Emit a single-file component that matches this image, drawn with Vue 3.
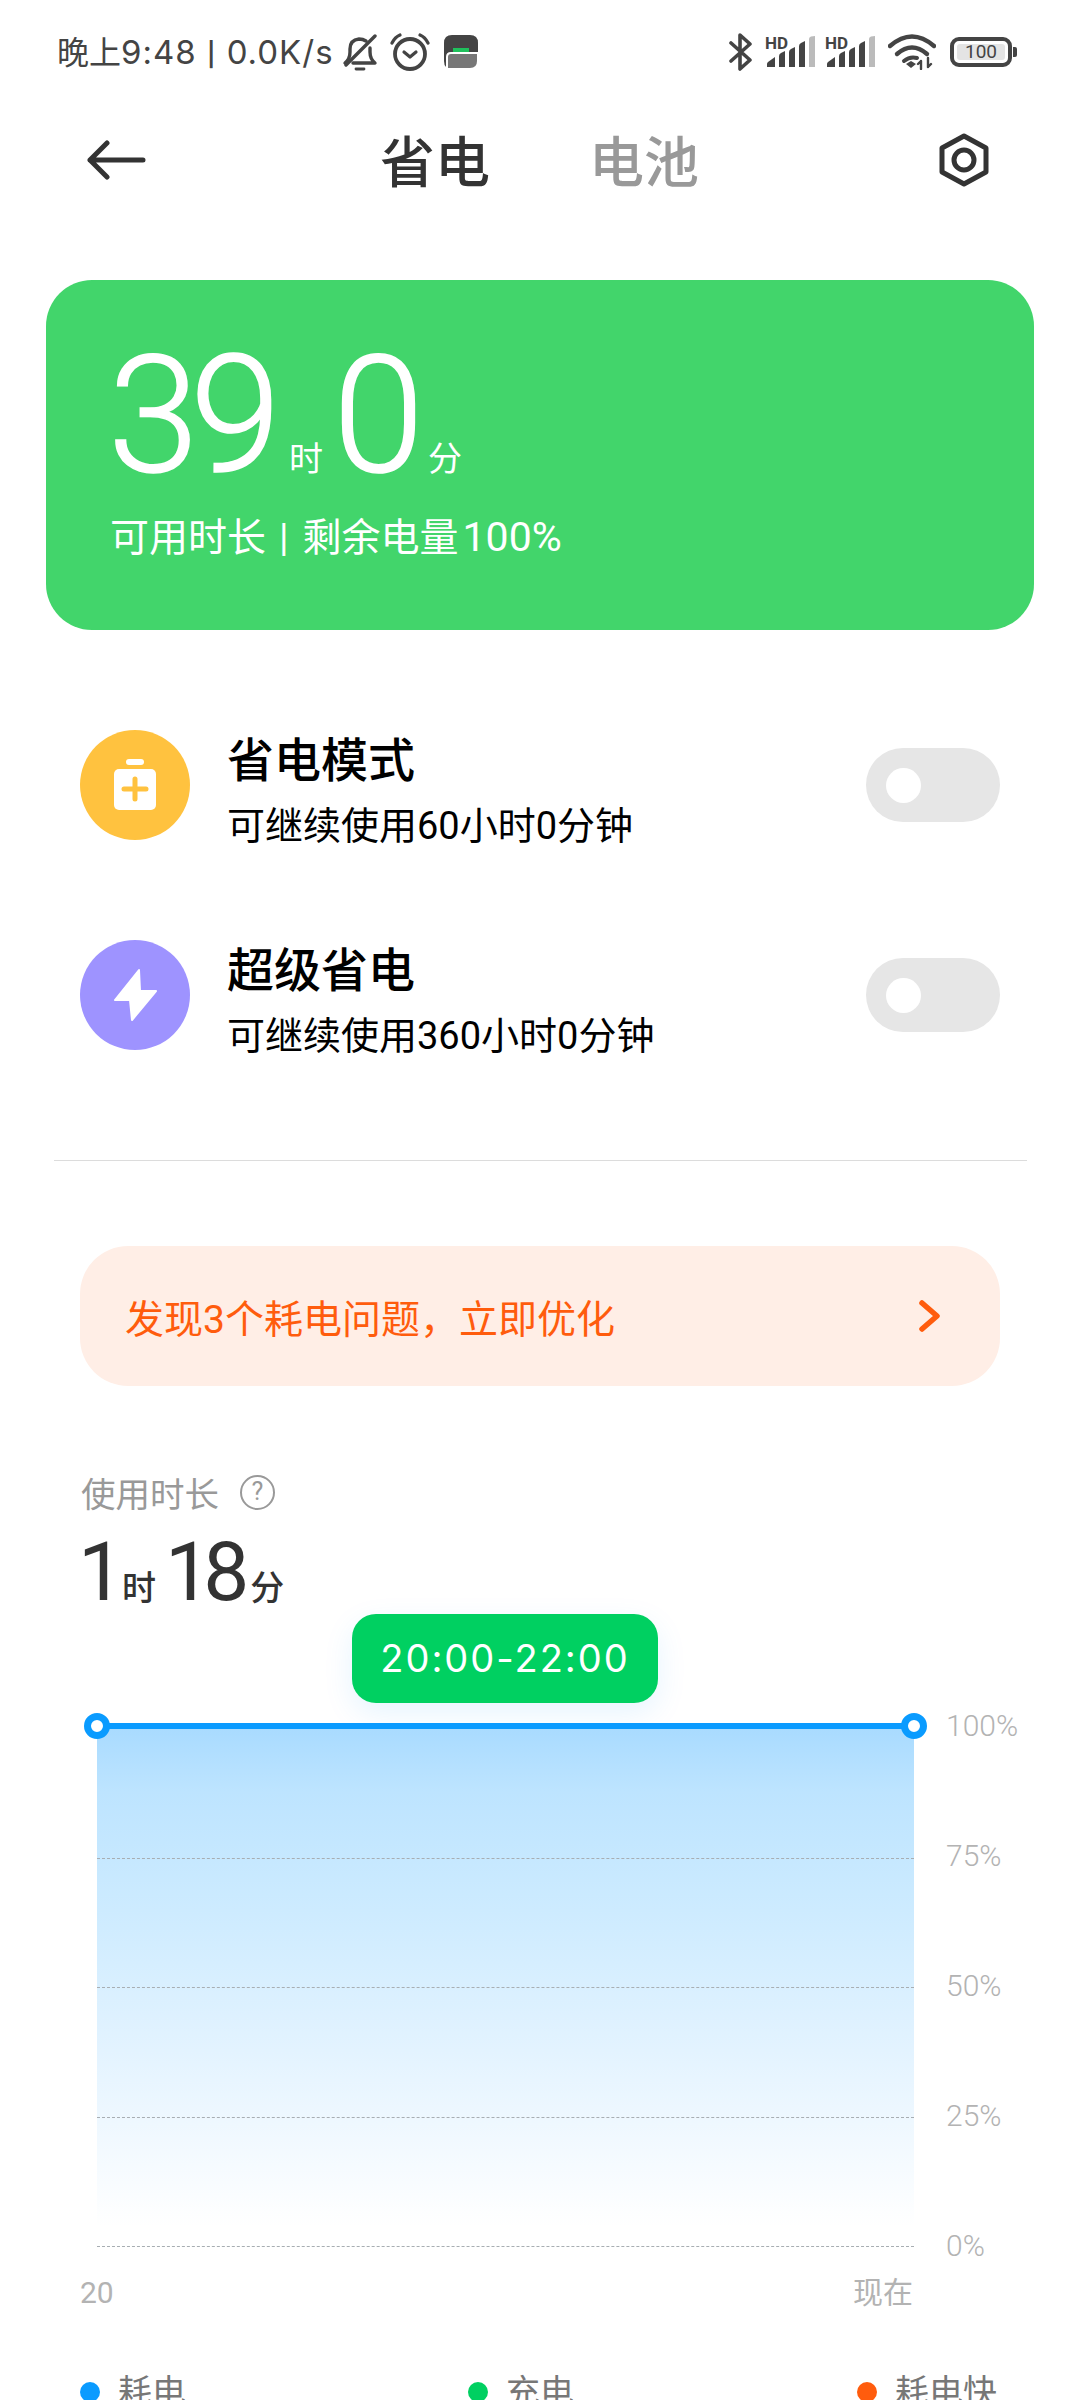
<script setup>
const modes = [
  { title: '省电模式', sub: '可继续使用60小时0分钟', color: 'yellow', kind: 'plus' },
  { title: '超级省电', sub: '可继续使用360小时0分钟', color: 'purple', kind: 'bolt' },
]
const axis = ['100%', '75%', '50%', '25%', '0%']
const legend = [
  { label: '耗电', color: 'blue' },
  { label: '充电', color: 'green' },
  { label: '耗电快', color: 'orange' },
]
const bars = [
  'M0 31 V28 Q0 27 1 26 L8 21 V31 Z',
  'M12 31 V20 Q12 18 14 17 L18 15 V31 Z',
  'M22 31 V16 Q22 14 24 13 L28 11 V31 Z',
  'M32 31 V10 Q32 8 34 7 L38 5 V31 Z',
]
</script>

<template>
  <div class="page">
    <div class="status">
      <div class="status-text">晚上<span class="status-latin">9:48 <span class="status-sep">|</span> 0.0K/s</span></div>
      <svg class="ic-bell" viewBox="0 0 36 38" fill="none" stroke="#444" stroke-width="3.400" stroke-linecap="round" stroke-linejoin="round">
        <path d="M3 29 Q8 25 8 18 V15 Q8 6 17 5 Q21 5 24 7" />
        <path d="M28 14 V18 Q28 25 33 29 H11" />
        <path d="M4 31 L33 2" />
        <path d="M14 35 H22" stroke-width="2.800" />
      </svg>
      <svg class="ic-alarm" viewBox="0 0 40 38" fill="none" stroke="#444" stroke-linecap="round" stroke-linejoin="round">
        <circle cx="20" cy="21" r="15" stroke-width="3.800" />
        <path d="M14 19 L20 24 L26 19" stroke-width="3.200" />
        <path d="M2 10 Q5 4 10 2 M30 2 Q35 4 38 10" stroke-width="3.200" />
      </svg>
      <svg class="ic-app" viewBox="0 0 34 34">
        <path d="M8 0 H26 Q34 0 34 8 V26 Q34 34 26 34 H8 Q0 34 0 26 V8 Q0 0 8 0 Z" fill="#444" />
        <rect x="9" y="13" width="16" height="4" fill="#1fc15c" />
        <path d="M3 34 V22 Q3 18 7 18 H34 V26 Q34 34 26 34 Z" fill="#777" stroke="#fff" stroke-width="2" />
      </svg>
      <div class="status-right">
        <svg class="ic-bt" viewBox="0 0 24 40" fill="none" stroke="#444" stroke-width="3.600" stroke-linecap="round" stroke-linejoin="round">
          <path d="M2 11 L21 28 L11 37 V3 L21 12 L2 29" />
        </svg>
        <svg v-for="n in 2" :key="n" class="ic-signal" viewBox="0 0 50 32">
          <text x="0" y="13" class="hd">HD</text>
          <g transform="translate(2 0)">
            <path v-for="(d, i) in bars" :key="i" :d="d" fill="#444" />
            <path d="M42 31 V3 Q42 1 44 0.500 L48 0 V31 Z" fill="#bbb" />
          </g>
        </svg>
        <svg class="ic-wifi" viewBox="0 0 48 36" fill="none" stroke="#444" stroke-linecap="round">
          <path d="M2 12 Q24 -7 46 12" stroke-width="4.400" />
          <path d="M9 20 Q24 7 39 20" stroke-width="4.400" />
          <path d="M16 27 Q22 22 29 24" stroke-width="4" />
          <path d="M18 30 L23 34 L28 30 L23 27 Z" fill="#444" stroke="none" />
          <path d="M33 35 V27 M30 30 L33 27 M40 24 V33 M40 33 L43 30" stroke-width="2.400" />
        </svg>
        <div class="battery">
          <div class="battery-body"><span class="battery-level">100</span></div>
          <span class="battery-nub"></span>
        </div>
      </div>
    </div>

    <div class="nav">
      <svg class="ic-back" viewBox="0 0 60 40" fill="none" stroke="#333" stroke-width="5" stroke-linecap="round" stroke-linejoin="round">
        <path d="M57 20 H4 M21 3 L4 20 L21 37" />
      </svg>
      <span class="tab active">省电</span>
      <span class="tab">电池</span>
      <svg class="ic-gear" viewBox="0 0 50 54" fill="none" stroke="#333" stroke-width="5" stroke-linejoin="round">
        <path d="M25 3 L47 15 V39 L25 51 L3 39 V15 Z" />
        <circle cx="25" cy="27" r="10" />
      </svg>
    </div>

    <section class="hero">
      <div class="hero-time">
        <span class="hero-num">39</span><span class="hero-unit unit-h">时</span><span class="hero-num">0</span><span class="hero-unit unit-m">分</span>
      </div>
      <div class="hero-sub">可用时长<span class="hero-sep">|</span>剩余电量<span class="hero-latin">100%</span></div>
    </section>

    <section class="modes">
      <div v-for="m in modes" :key="m.title" class="mode">
        <div class="mode-icon" :class="m.color">
          <svg v-if="m.kind === 'plus'" viewBox="0 0 110 110">
            <rect x="46" y="29" width="18" height="6" rx="3" fill="#fff" />
            <rect x="34" y="39" width="42" height="41" rx="5" fill="#fff" />
            <path d="M55 49 V69 M44 59 H66" stroke="#ffc23f" stroke-width="5" stroke-linecap="round" />
          </svg>
          <svg v-else viewBox="0 0 110 110">
            <path d="M59 30 L35 60 H50 L52 80 L76 51 H60 Z" fill="#fff" stroke="#fff" stroke-width="2" stroke-linejoin="round" />
          </svg>
        </div>
        <div class="mode-text">
          <div class="mode-title">{{ m.title }}</div>
          <div class="mode-sub">{{ m.sub }}</div>
        </div>
        <div class="toggle"><span class="knob"></span></div>
      </div>
    </section>

    <div class="divider"></div>

    <div class="banner">
      <span>发现3个耗电问题，立即优化</span>
      <svg class="ic-chevron" viewBox="0 0 24 34" fill="none" stroke="#ff5c0d" stroke-width="5.500" stroke-linecap="round" stroke-linejoin="round">
        <path d="M4 4 L19 17 L4 30" />
      </svg>
    </div>

    <div class="usage-label">
      <span>使用时长</span>
      <span class="help">?</span>
    </div>
    <div class="usage-time">
      <span class="usage-num">1</span><span class="usage-unit">时</span><span class="usage-num second">18</span><span class="usage-unit last">分</span>
    </div>

    <div class="tip">20:00-22:00</div>

    <div class="chart">
      <div class="plot">
        <span class="dot left"></span>
        <span class="dot right"></span>
        <div v-for="n in 4" :key="n" class="grid-row"></div>
      </div>
      <div class="axis">
        <span v-for="a in axis" :key="a" class="axis-label">{{ a }}</span>
      </div>
    </div>

    <div class="x-axis">
      <span>20</span>
      <span>现在</span>
    </div>

    <div class="legend">
      <div v-for="l in legend" :key="l.label" class="legend-item">
        <span class="legend-dot" :class="l.color"></span>
        <span>{{ l.label }}</span>
      </div>
    </div>
  </div>
</template>

<style>
html, body { margin: 0; background: #fff; }
</style>

<style scoped>
.page {
  width: 1080px;
  height: 2400px;
  overflow: hidden;
  background: #fff;
  font-family: Roboto, "Noto Sans CJK SC", sans-serif;
  color: #333;
}
.status {
  height: 104px;
  display: flex;
  align-items: center;
  padding: 0 63px 0 57px;
  box-sizing: border-box;
}
.status-text { font-size: 32px; line-height: 40px; color: #444; white-space: nowrap; width: 285px; }
.status-latin { font-family: Inter, Roboto, sans-serif; font-size: 33px; letter-spacing: 1px; }
.status-sep { font-family: Roboto, sans-serif; font-weight: 700; }
.ic-bell { width: 36px; height: 38px; margin-top: 1px; }
.ic-alarm { width: 40px; height: 38px; margin-left: 12px; }
.ic-app { width: 34px; height: 34px; margin-left: 14px; }
.status-right { margin-left: auto; display: flex; align-items: center; }
.ic-bt { width: 24px; height: 40px; margin-right: 12px; }
.ic-signal { width: 50px; height: 32px; margin-right: 10px; overflow: visible; }
.hd { font: 700 17px Roboto, sans-serif; fill: #444; }
.ic-wifi { width: 48px; height: 36px; margin-left: 3px; margin-right: 14px; }
.battery { display: flex; align-items: center; }
.battery-body {
  width: 62px;
  height: 30px;
  box-sizing: border-box;
  border: 4px solid #444;
  border-radius: 9px;
  padding: 3px;
  display: flex;
}
.battery-level {
  flex: 1;
  background: #e4e4e4;
  border-radius: 3px;
  font-size: 19px;
  line-height: 16px;
  text-align: center;
  color: #444;
}
.battery-nub { width: 4px; height: 10px; background: #444; border-radius: 0 2px 2px 0; margin-left: 1px; }

.nav { height: 112px; display: flex; align-items: center; padding-left: 86px; }
.ic-back { width: 60px; height: 40px; margin-right: 234px; }
.tab { font-size: 55px; line-height: 60px; font-weight: 500; color: #999; margin: 5px 99px 0 0; }
.tab.active { color: #333; }
.ic-gear { width: 50px; height: 54px; margin-left: 141px; }

.hero {
  margin: 64px 46px 0 46px;
  height: 350px;
  box-sizing: border-box;
  background: #42d56b;
  border-radius: 46px;
  color: #fff;
  padding: 55px 0 0 62px;
}
.hero-time { display: flex; align-items: baseline; height: 160px; line-height: 160px; }
.hero-num { font-family: Roboto, sans-serif; font-weight: 300; font-size: 164px; letter-spacing: -9px; -webkit-text-stroke: 1.500px #fff; }
.hero-unit { font-size: 34px; line-height: 40px; font-family: "Noto Sans CJK SC", sans-serif; }
.unit-h { margin: 0 10px 0 17px; }
.unit-m { margin-left: 13px; }
.hero-sub { font-size: 39px; line-height: 50px; margin-top: 17px; margin-left: 2px; white-space: nowrap; }
.hero-sep { margin: 0 14px 0 13px; }
.hero-latin { font-size: 41px; margin-left: 4px; }

.modes { margin-top: 100px; padding: 0 80px; display: flex; flex-direction: column; gap: 100px; }
.mode { display: flex; align-items: center; height: 110px; }
.mode-icon { width: 110px; height: 110px; border-radius: 50%; flex: none; }
.mode-icon svg { display: block; width: 110px; height: 110px; }
.mode-icon.yellow { background: #ffc23f; }
.mode-icon.purple { background: #9e93ff; }
.mode-text { margin-left: 37px; flex: 1; color: #000; padding-top: 12px; }
.mode-title { font-size: 47px; line-height: 58px; font-weight: 500; }
.mode-sub { font-size: 38px; line-height: 48px; margin-top: 12px; white-space: nowrap; }
.toggle {
  width: 134px;
  height: 74px;
  border-radius: 37px;
  background: #e6e6e6;
  display: flex;
  align-items: center;
  padding-left: 20px;
  box-sizing: border-box;
}
.knob { width: 35px; height: 35px; border-radius: 50%; background: #fff; }

.divider { height: 1px; background: #dcdcdc; margin: 110px 53px 0 54px; }

.banner {
  margin: 85px 80px 0;
  height: 140px;
  border-radius: 48px;
  background: #ffeee6;
  color: #ff5c0d;
  display: flex;
  align-items: center;
  justify-content: space-between;
  padding: 0 58px 0 45px;
  font-size: 39px;
}
.ic-chevron { width: 24px; height: 34px; }

.usage-label {
  margin: 86px 0 0 81px;
  display: flex;
  align-items: center;
  height: 40px;
  font-size: 34.500px;
  color: #999;
}
.help {
  margin-left: 21px;
  width: 35px;
  height: 35px;
  box-sizing: border-box;
  border: 2.500px solid #999;
  border-radius: 50%;
  font-size: 25px;
  line-height: 30px;
  text-align: center;
}
.usage-time { margin: 18px 0 0 78px; display: flex; align-items: baseline; height: 84px; line-height: 84px; }
.usage-num { font-size: 82px; font-family: Roboto, sans-serif; font-weight: 400; letter-spacing: -8px; }
.usage-num.second { margin-left: 9px; }
.usage-unit { font-size: 34px; line-height: 40px; margin-left: 6px; font-weight: 500; font-family: "Noto Sans CJK SC", sans-serif; }
.usage-unit.last { margin-left: 9px; }

.tip {
  margin: 0 0 0 352px;
  width: 306px;
  height: 89px;
  border-radius: 24px;
  background: #00d061;
  color: #fff;
  font-family: Inter, Roboto, sans-serif;
  font-size: 38px;
  letter-spacing: 2px;
  line-height: 89px;
  text-align: center;
  box-shadow: 0 10px 30px rgba(0, 150, 255, 0.1);
  position: relative;
}

.chart { margin: 20px 0 0 97px; display: flex; align-items: flex-start; height: 524px; }
.plot {
  position: relative;
  width: 817px;
  border-top: 6px solid #0a9bff;
  background: linear-gradient(#a9dbff 0%, #bde4ff 12%, #cdebff 35%, #e3f3ff 62%, #ffffff 96%);
}
.grid-row { height: 129.500px; box-sizing: border-box; border-bottom: 1px dashed #a8aeb3; }
.dot {
  position: absolute;
  top: -16px;
  width: 26px;
  height: 26px;
  box-sizing: border-box;
  border: 7px solid #0a9bff;
  border-radius: 50%;
  background: #fff;
}
.dot.left { left: -13px; }
.dot.right { right: -13px; }
.axis { margin: -62px 0 0 32px; display: flex; flex-direction: column; }
.axis-label { height: 130px; line-height: 130px; font-size: 30px; color: #b3b3b3; font-weight: 300; }

.x-axis {
  margin: 25px 167px 0 80px;
  display: flex;
  justify-content: space-between;
  font-size: 30px;
  line-height: 42px;
  color: #b3b3b3;
}

.legend {
  margin-top: 55px;
  padding-left: 80px;
  display: grid;
  grid-template-columns: 388px 389px auto;
  font-size: 34px;
  line-height: 46px;
  color: #777;
}
.legend-item { display: flex; align-items: center; }
.legend-dot { width: 20px; height: 20px; border-radius: 50%; margin-right: 18px; }
.legend-dot.blue { background: #0a9bff; }
.legend-dot.green { background: #00d061; }
.legend-dot.orange { background: #ff5c0d; }
</style>
